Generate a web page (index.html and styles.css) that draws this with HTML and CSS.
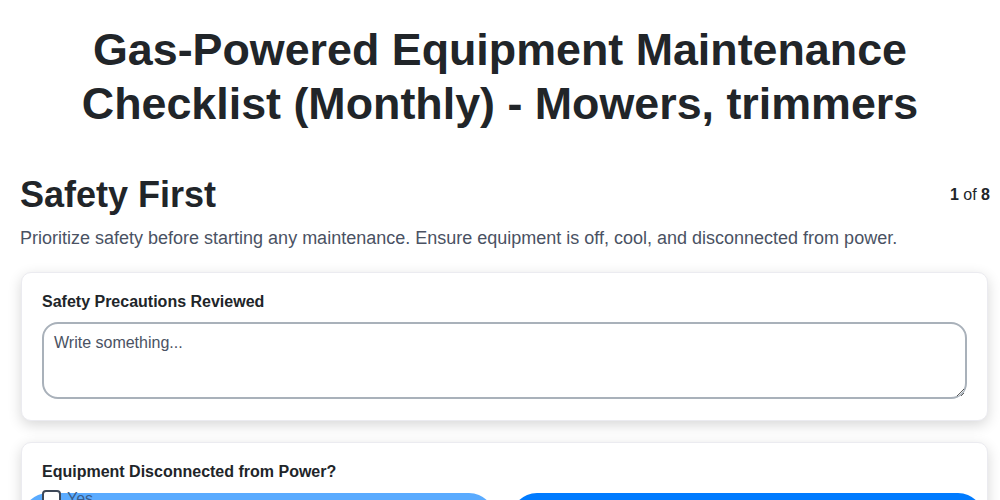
FILE: index.html
```html
<!DOCTYPE html>
<html lang="en">
<head>
<meta charset="utf-8">
<title>Checklist</title>
<link rel="stylesheet" href="styles.css">
</head>
<body>
<div class="page">
  <h1 class="title">Gas-Powered Equipment Maintenance Checklist (Monthly) - Mowers, trimmers</h1>
  <div class="section-head">
    <h2 class="section-title">Safety First</h2>
    <div class="counter"><b>1</b> of <b>8</b></div>
  </div>
  <p class="desc">Prioritize safety before starting any maintenance. Ensure equipment is off, cool, and disconnected from power.</p>

  <div class="card">
    <label class="field-label" for="t1">Safety Precautions Reviewed</label>
    <textarea id="t1" class="textarea" placeholder="Write something..."></textarea>
  </div>

  <div class="card">
    <div class="field-label">Equipment Disconnected from Power?</div>
    <div class="options">
      <div class="option option-light">
        <label class="option-label"><span class="box"></span>Yes</label>
      </div>
      <div class="option option-dark"></div>
    </div>
  </div>
</div>
</body>
</html>
```
FILE: styles.css
```css
* { box-sizing: border-box; }
html, body { margin: 0; padding: 0; background: #fff; }
body {
  font-family: "Liberation Sans", Arial, sans-serif;
  color: #212529;
}
.page {
  padding: 23px 10px 0 20px;
}
.title {
  margin: 0 0 0 -10px;
  padding: 0 40px;
  text-align: center;
  font-size: 44.8px;
  line-height: 53.5px;
  font-weight: 700;
  color: #212529;
}
.section-head {
  display: flex;
  justify-content: space-between;
  align-items: center;
  margin-top: 43px;
}
.section-title {
  margin: 0;
  font-size: 36px;
  line-height: 43px;
  font-weight: 700;
}
.counter {
  font-size: 16px;
  color: #212529;
}
.desc {
  margin: 9px 0 20px;
  font-size: 18px;
  line-height: 27px;
  color: #4a5263;
}
.card {
  margin: 0 2px 21px 1px;
  background: #fff;
  border: 1px solid #ebebf0;
  border-radius: 10px;
  box-shadow: 0 4px 14px rgba(0, 0, 0, 0.16);
  padding: 19px 20px 21px;
  overflow: visible;
}
.field-label {
  display: block;
  font-size: 16px;
  font-weight: 700;
  line-height: 19px;
  margin-bottom: 11px;
  color: #212529;
}
.textarea {
  display: block;
  width: 100%;
  height: 77px;
  border: 2px solid #a9b1ba;
  border-radius: 16px;
  padding: 10px 10px;
  font-family: "Liberation Sans", Arial, sans-serif;
  font-size: 16px;
  color: #212529;
  resize: vertical;
}
.textarea::placeholder { color: #4a5263; opacity: 1; }
.options {
  display: grid;
  grid-template-columns: 1fr 1fr;
  gap: 16px;
  margin: 12px -17px 0 -20px;
}
.option {
  height: 56px;
  border-radius: 26px;
}
.option-light { background: #5aabff; }
.option-dark { background: #007bff; }
.option-label {
  display: flex;
  align-items: flex-start;
  gap: 6px;
  margin: -3px 0 0 20px;
  font-size: 16px;
  line-height: 18px;
  color: #3b5d8a;
}
.box {
  display: inline-block;
  width: 19px;
  height: 19px;
  border: 2px solid #3d4858;
  border-radius: 4px;
  background: #fff;
}
```
